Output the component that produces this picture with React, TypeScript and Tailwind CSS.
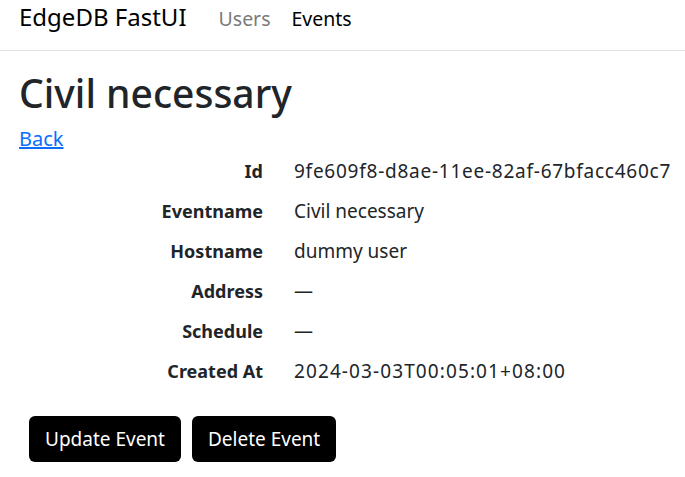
import React from "react";

const rows: [string, string, string][] = [
  ["Id", "9fe609f8-d8ae-11ee-82af-67bfacc460c7", "tracking-[0.75px]"],
  ["Eventname", "Civil necessary", "tracking-[0px]"],
  ["Hostname", "dummy user", "tracking-[0px]"],
  ["Address", "—", "tracking-[0px]"],
  ["Schedule", "—", "tracking-[0px]"],
  ["Created At", "2024-03-03T00:05:01+08:00", "tracking-[1.1px]"],
];

export default function App() {
  return (
    <div className="w-[685px] h-[477px] overflow-hidden bg-white text-[#212529]" style={{ fontFamily: '"Noto Sans", sans-serif' }}>
      <div className="h-[51px] border-b border-[#dee2e6] flex items-start pt-[2px]">
        <div className="flex items-baseline pl-[19px]">
          <span className="text-[24px] text-black leading-[30px]">EdgeDB FastUI</span>
          <span className="ml-[32px] text-[19.5px] leading-[30px] text-[#7a7a7a]">Users</span>
          <span className="ml-[21px] text-[19.5px] leading-[30px] text-black">Events</span>
        </div>
      </div>
      <div className="pl-[19px]">
        <h1 className="text-[39px] font-medium leading-[46px] mt-[19px] text-[#212529]">Civil necessary</h1>
        <a href="#" className="block w-fit text-[20px] leading-[24px] text-[#0d6efd] underline mt-[11px]">Back</a>
      </div>
      <div>
        {rows.map(([k, v, t]) => (
          <div key={k} className="flex h-[40px] items-center">
            <div className="w-[263px] text-right font-bold text-[18px] text-[#212529]">{k}</div>
            <div className={"ml-[31px] text-[19px] text-[#212529] " + t}>{v}</div>
          </div>
        ))}
      </div>
      <div className="flex gap-[11px] pl-[29px] mt-[25px]">
        <button className="h-[46px] px-[16px] bg-black text-white rounded-[6px] text-[19px]">Update Event</button>
        <button className="h-[46px] px-[16px] bg-black text-white rounded-[6px] text-[19px]">Delete Event</button>
      </div>
    </div>
  );
}
